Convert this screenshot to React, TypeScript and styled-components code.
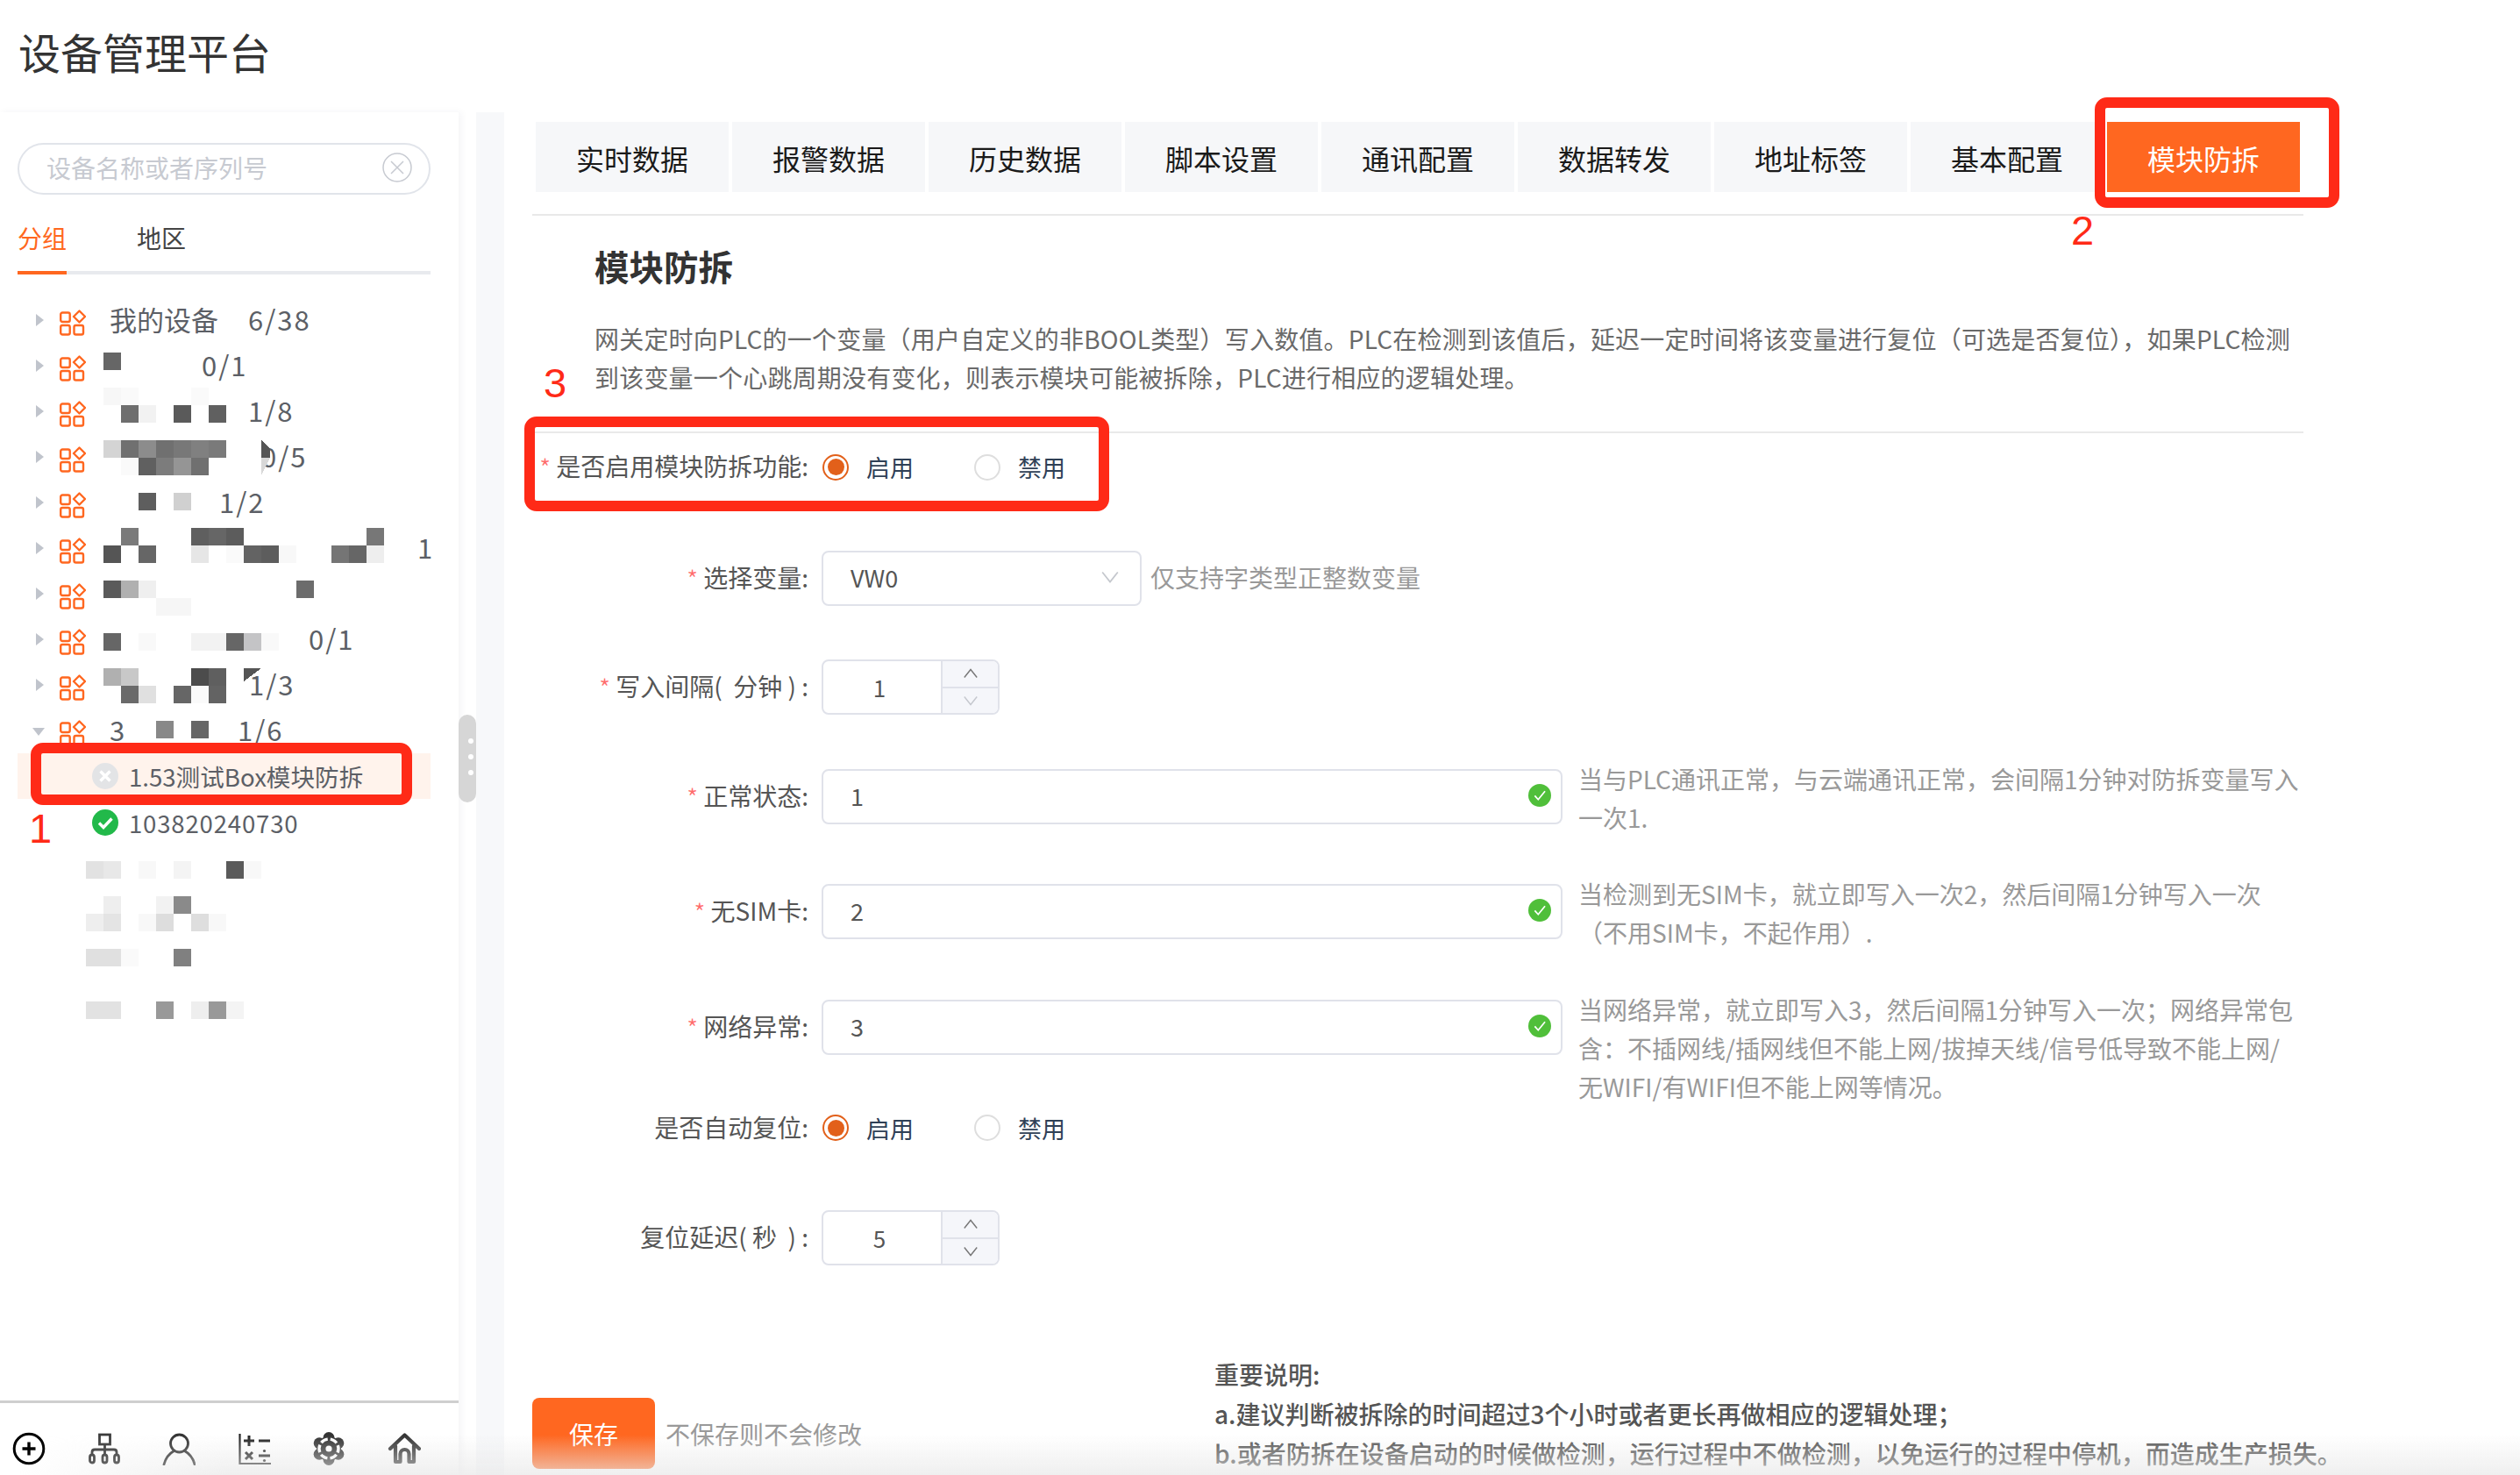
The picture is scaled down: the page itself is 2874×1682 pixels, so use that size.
import React from 'react'
import styled, { createGlobalStyle } from 'styled-components'

const ORANGE = '#ff6720'
const RED = '#ff2a17'
const FONT = '"Noto Sans CJK SC", "Noto Sans", sans-serif'

const GlobalStyle = createGlobalStyle`
  html, body {
    margin: 0;
    padding: 0;
    background: #fff;
  }
  * {
    box-sizing: border-box;
  }
`

const Page = styled.div`
  position: relative;
  width: 2874px;
  height: 1682px;
  overflow: hidden;
  background: #fff;
  font-family: ${FONT};
  color: #555;
`

const Header = styled.header`
  height: 128px;
  display: flex;
  align-items: center;
  padding: 0 0 12px 21px;
  font-size: 48px;
  color: #333;
`

const Body = styled.div`
  display: flex;
  height: 1554px;
`

const Sidebar = styled.aside`
  width: 523px;
  flex: none;
  display: flex;
  flex-direction: column;
  box-shadow: 3px 0 8px rgba(30, 40, 70, 0.05);
`

const Search = styled.div`
  width: 471px;
  height: 59px;
  margin: 35px 0 0 20px;
  padding: 0 19px 3px 31px;
  display: flex;
  align-items: center;
  justify-content: space-between;
  border: 2px solid #e1e4ea;
  border-radius: 30px;
  font-size: 28px;
  color: #c7cad1;
`

const SideTabs = styled.div`
  width: 471px;
  margin: 27px 0 0 20px;
  display: flex;
  gap: 80px;
  border-bottom: 4px solid #e8eaee;
`

const SideTab = styled.div<{ $active?: boolean }>`
  line-height: 44px;
  padding-bottom: 16px;
  margin-bottom: -4px;
  font-size: 28px;
  color: ${({ $active }) => ($active ? ORANGE : '#444')};
  border-bottom: 4px solid ${({ $active }) => ($active ? ORANGE : 'transparent')};
`

const Tree = styled.div`
  position: relative;
  margin-top: 26px;
`

const TreeRow = styled.div`
  height: 52px;
  display: flex;
  align-items: center;
  padding-left: 41px;
  font-size: 31px;
  color: #5c5f66;
  white-space: nowrap;
`

const Arrow = styled.span<{ $open?: boolean }>`
  width: 0;
  height: 0;
  flex: none;
  ${({ $open }) =>
    $open
      ? `
    margin: 2px 17px 0 -4px;
    border-left: 7px solid transparent;
    border-right: 7px solid transparent;
    border-top: 9px solid #c0c4cc;
  `
      : `
    margin-right: 18px;
    border-top: 7px solid transparent;
    border-bottom: 7px solid transparent;
    border-left: 9px solid #c0c4cc;
  `}
`

const GroupIconSvg = styled.svg`
  width: 30px;
  height: 30px;
  flex: none;
  margin-top: 5px;
  fill: none;
  stroke: ${ORANGE};
  stroke-width: 2.4;
`

const Name = styled.span<{ $width: number }>`
  width: ${({ $width }) => $width}px;
  margin: -3px 0 0 27px;
  flex: none;
`

const Count = styled.span`
  margin-top: -3px;
  letter-spacing: 2px;
`

const DeviceRow = styled.div<{ $selected?: boolean }>`
  height: 52px;
  width: 471px;
  margin: ${({ $selected }) => ($selected ? '0' : '1px')} 0 0 20px;
  padding-left: 85px;
  display: flex;
  align-items: center;
  gap: 12px;
  font-size: 27.6px;
  color: #5c5f66;
  background: ${({ $selected }) => ($selected ? '#fff3ec' : 'transparent')};
`

const DeviceSerial = styled.span`
  letter-spacing: 0.8px;
`

const StatusSvg = styled.svg`
  width: 30px;
  height: 30px;
  flex: none;
`

const Mosaic = styled.svg`
  position: absolute;
  left: 98px;
  top: 63px;
  width: 400px;
  height: 800px;
  pointer-events: none;
`

const SideFooter = styled.div`
  margin-top: auto;
  height: 85px;
  border-top: 3px solid #cfcfcf;
  display: flex;
  align-items: center;
  gap: 47.5px;
  padding: 22px 0 0 14px;
`

const FootIcon = styled.svg`
  width: 38px;
  height: 38px;
  flex: none;
`

const Handle = styled.div`
  width: 20px;
  flex: none;
  padding-top: 687px;
`

const HandleGrip = styled.div`
  width: 20px;
  height: 100px;
  border-radius: 10px;
  background: #d6d6d6;
  display: flex;
  flex-direction: column;
  align-items: center;
  gap: 12px;
  padding: 27px 0 0 7px;
`

const GripDot = styled.span`
  width: 6px;
  height: 6px;
  border-radius: 50%;
  background: #fff;
`

const Band = styled.div`
  width: 32px;
  flex: none;
  background: #f7f8fa;
`

const Main = styled.main`
  width: 2020px;
  margin-left: 32px;
  flex: none;
  display: flex;
  flex-direction: column;
`

const TabBar = styled.nav`
  height: 118px;
  padding: 11px 0 0 4px;
  display: flex;
  gap: 4px;
  border-bottom: 2px solid #e9e9e9;
`

const Tab = styled.div<{ $active?: boolean }>`
  width: 220px;
  height: 80px;
  padding-top: 2px;
  display: flex;
  align-items: center;
  justify-content: center;
  font-size: 32px;
  color: ${({ $active }) => ($active ? '#fff' : '#1a1a1a')};
  background: ${({ $active }) => ($active ? ORANGE : '#f6f7f9')};
`

const Intro = styled.section`
  height: 248px;
  padding: 31px 0 0 71px;
  border-bottom: 2px solid #e9e9e9;
`

const Heading = styled.h2`
  margin: 0;
  font-size: 39.5px;
  line-height: 52px;
  font-weight: 700;
  color: #333;
`

const Description = styled.p`
  margin: 35px 0 0;
  font-size: 28px;
  letter-spacing: 0.2px;
  line-height: 44px;
  color: #6a6a6a;
  white-space: nowrap;
`

const Form = styled.div`
  padding-top: 7px;
`

const FormRow = styled.div<{ $height?: number; $gap: number }>`
  height: ${({ $height }) => $height ?? 63}px;
  margin-bottom: ${({ $gap }) => $gap}px;
  display: grid;
  grid-template-columns: 315px 845px 826px;
  grid-template-rows: ${({ $height }) => $height ?? 63}px;
  column-gap: 15px;
  align-items: center;
`

const Label = styled.label`
  display: flex;
  justify-content: flex-end;
  align-items: center;
  gap: 6px;
  padding-bottom: 3px;
  font-size: 28px;
  color: #555;
  white-space: pre;
`

const Star = styled.span`
  font-size: 30px;
  font-weight: 300;
  line-height: 1;
  color: #ff6b6b;
  margin-top: 4px;
`

const Control = styled.div`
  display: flex;
  align-items: center;
  gap: 10px;
`

const RadioGroupWrap = styled(Control)`
  padding-left: 1px;
`

const RadioOption = styled.span<{ $width: number }>`
  width: ${({ $width }) => $width}px;
  display: flex;
  align-items: center;
  gap: 20px;
  font-size: 27px;
  color: #2f4056;
`

const RadioRing = styled.span<{ $checked?: boolean }>`
  width: 30px;
  height: 30px;
  flex: none;
  display: flex;
  align-items: center;
  justify-content: center;
  border-radius: 50%;
  border: 2px solid ${({ $checked }) => ($checked ? '#e2601a' : '#dedede')};
  &::after {
    content: '';
    width: 19px;
    height: 19px;
    border-radius: 50%;
    background: ${({ $checked }) => ($checked ? '#e2601a' : 'transparent')};
  }
`

const Field = styled.div<{ $width: number; $endPad: number }>`
  width: ${({ $width }) => $width}px;
  height: 63px;
  flex: none;
  display: flex;
  align-items: center;
  justify-content: space-between;
  padding: 0 ${({ $endPad }) => $endPad}px 3px 31px;
  border: 2px solid #e0e2ea;
  border-radius: 8px;
  font-size: 27px;
  color: #555;
`

const Chevron = styled.svg<{ $color: string; $size: number }>`
  width: ${({ $size }) => $size}px;
  height: ${({ $size }) => $size}px;
  fill: none;
  stroke: ${({ $color }) => $color};
  stroke-width: 1.6;
`

const CheckSvg = styled.svg`
  width: 26px;
  height: 26px;
  flex: none;
`

const Hint = styled.span`
  padding-bottom: 3px;
  font-size: 28px;
  color: #999;
  white-space: nowrap;
`

const Stepper = styled.div`
  width: 203px;
  height: 63px;
  flex: none;
  display: flex;
  border: 2px solid #e0e2ea;
  border-radius: 8px;
  overflow: hidden;
`

const StepValue = styled.div`
  flex: 1;
  display: flex;
  align-items: center;
  justify-content: center;
  padding-right: 6px;
  font-size: 26px;
  color: #555;
`

const StepButtons = styled.div`
  width: 65px;
  display: flex;
  flex-direction: column;
  border-left: 2px solid #e0e2ea;
  background: #f5f6fa;
`

const StepButton = styled.div`
  flex: 1;
  display: flex;
  align-items: center;
  justify-content: center;
  & + & {
    border-top: 2px solid #e0e2ea;
  }
`

const HelpText = styled.p`
  margin: -11px 0 0 3px;
  align-self: start;
  font-size: 28px;
  line-height: 44px;
  color: #999;
  white-space: nowrap;
`

const Actions = styled.div`
  height: 137px;
  display: flex;
  align-items: flex-end;
`

const SaveButton = styled.button`
  width: 140px;
  height: 81px;
  flex: none;
  margin-bottom: 7px;
  padding: 0;
  border: 0;
  border-radius: 8px;
  background: ${ORANGE};
  color: #fff;
  font-family: ${FONT};
  font-size: 28px;
`

const SaveHint = styled.span`
  flex: none;
  width: 224px;
  margin: 0 0 25px 12px;
  font-size: 28px;
  line-height: 44px;
  color: #999;
  white-space: nowrap;
`

const Notes = styled.div`
  flex: none;
  margin: 0 0 2px 402px;
  font-size: 28px;
  line-height: 45px;
  font-weight: 500;
  color: #555;
  white-space: nowrap;
`

const RedBox = styled.div<{ $x: number; $y: number; $w: number; $h: number }>`
  position: absolute;
  left: ${({ $x }) => $x}px;
  top: ${({ $y }) => $y}px;
  width: ${({ $w }) => $w}px;
  height: ${({ $h }) => $h}px;
  border: 12px solid ${RED};
  border-radius: 14px;
  pointer-events: none;
`

const Mark = styled.span<{ $x: number; $y: number }>`
  position: absolute;
  left: ${({ $x }) => $x}px;
  top: ${({ $y }) => $y}px;
  font-family: "Liberation Sans", sans-serif;
  font-size: 47px;
  line-height: 54px;
  color: ${RED};
`

const BottomFade = styled.div`
  position: absolute;
  left: 0;
  right: 0;
  bottom: 0;
  height: 46px;
  background: linear-gradient(rgba(232, 232, 232, 0), rgba(232, 232, 232, 0.7));
  mask-image: linear-gradient(90deg, transparent 20px, #000 260px);
  pointer-events: none;
`

const tabs = ['实时数据', '报警数据', '历史数据', '脚本设置', '通讯配置', '数据转发', '地址标签', '基本配置', '模块防拆']

const groups = [
  { name: '我的设备', width: 158, count: '6/38' },
  { name: '', width: 105, count: '0/1' },
  { name: '', width: 158, count: '1/8' },
  { name: '', width: 173, count: '0/5' },
  { name: '', width: 125, count: '1/2' },
  { name: '', width: 351, count: '1' },
  { name: '', width: 158, count: '' },
  { name: '', width: 227, count: '0/1' },
  { name: '', width: 159, count: '1/3' },
  { name: '3', width: 146, count: '1/6' },
]

// blurred names in the tree: [column, row, grey]
const cells: [number, number, string][] = [
  [1, 0, '#666'],
  [1, 2, '#f7f7f7'], [2, 2, '#fafafa'], [6, 2, '#fafafa'],
  [2, 3, '#6e6e6e'], [3, 3, '#f2f2f2'], [5, 3, '#5a5a5a'], [7, 3, '#606060'],
  [1, 5, '#d4d4d4'], [2, 5, '#707070'], [3, 5, '#8c8c8c'], [4, 5, '#707070'], [5, 5, '#787878'], [6, 5, '#808080'], [7, 5, '#7a7a7a'],
  [2, 6, '#fafafa'], [3, 6, '#606060'], [4, 6, '#7c7c7c'], [5, 6, '#959595'], [6, 6, '#707070'],
  [3, 8, '#5e5e5e'], [5, 8, '#d0d0d0'],
  [2, 10, '#7a7a7a'], [6, 10, '#5f5f5f'], [7, 10, '#666'], [8, 10, '#5c5c5c'], [16, 10, '#777'],
  [1, 11, '#555'], [3, 11, '#666'], [6, 11, '#e6e6e6'], [8, 11, '#fafafa'], [9, 11, '#636363'], [10, 11, '#5d5d5d'], [11, 11, '#f8f8f8'],
  [14, 11, '#757575'], [15, 11, '#666'], [16, 11, '#eee'],
  [1, 13, '#5a5a5a'], [2, 13, '#b0b0b0'], [3, 13, '#efefef'], [12, 13, '#6c6c6c'],
  [4, 14, '#f6f6f6'], [5, 14, '#f6f6f6'],
  [1, 16, '#666'], [3, 16, '#f9f9f9'], [6, 16, '#f2f2f2'], [7, 16, '#f2f2f2'], [8, 16, '#666'], [9, 16, '#c4c4c6'], [10, 16, '#f9f9f9'],
  [1, 18, '#b0b0b0'], [2, 18, '#c8c8c8'], [6, 18, '#4c4c4c'], [7, 18, '#5f5f5f'],
  [2, 19, '#6a6a6a'], [3, 19, '#e0e0e0'], [5, 19, '#666'], [6, 19, '#fafafa'], [7, 19, '#636363'],
  [4, 21, '#888'], [6, 21, '#666'],
  [0, 29, '#e2e2e2'], [1, 29, '#e8e8e8'], [3, 29, '#f8f8f8'], [5, 29, '#f4f4f4'], [8, 29, '#5a5a5a'], [9, 29, '#f8f8f8'],
  [1, 31, '#eee'], [4, 31, '#f2f2f2'], [5, 31, '#8a8a8a'],
  [0, 32, '#eee'], [1, 32, '#e4e4e4'], [3, 32, '#f8f8f8'], [4, 32, '#ddd'], [6, 32, '#dedede'], [7, 32, '#f8f8f8'],
  [0, 34, '#e0e0e0'], [1, 34, '#e0e0e0'], [2, 34, '#fafafa'], [5, 34, '#808080'],
  [0, 37, '#e2e2e2'], [1, 37, '#e2e2e2'], [4, 37, '#999'], [6, 37, '#eee'], [7, 37, '#999'], [8, 37, '#f4f4f4'],
]

const gearLobes = [-90, -30, 30, 90, 150, 210]

const GroupIcon = () => (
  <GroupIconSvg viewBox="0 0 30 30">
    <rect x="1.2" y="3.5" width="10.5" height="10.5" rx="2" />
    <rect x="1.2" y="18" width="10.5" height="10.5" rx="2" />
    <rect x="16.5" y="18" width="10.5" height="10.5" rx="2" />
    <path d="M22.5 1.5 L29 8 L22.5 14.5 L16 8 Z" strokeLinejoin="round" />
  </GroupIconSvg>
)

const Down = ({ color = '#c5c8ce', size = 22 }: { color?: string; size?: number }) => (
  <Chevron viewBox="0 0 20 20" $color={color} $size={size}>
    <path d="M2 5 L10 15 L18 5" />
  </Chevron>
)

const Up = ({ color = '#777', size = 18 }: { color?: string; size?: number }) => (
  <Chevron viewBox="0 0 20 20" $color={color} $size={size}>
    <path d="M2 15 L10 5 L18 15" />
  </Chevron>
)

const CheckBadge = () => (
  <CheckSvg viewBox="0 0 30 30">
    <circle cx="15" cy="15" r="15" fill="#50bf3a" />
    <path d="M8.5 15.5 L13 20.5 L22 9.5" fill="none" stroke="#fff" strokeWidth="2" />
  </CheckSvg>
)

const NumberField = ({ value, downColor }: { value: string; downColor: string }) => (
  <Stepper>
    <StepValue>{value}</StepValue>
    <StepButtons>
      <StepButton>
        <Up />
      </StepButton>
      <StepButton>
        <Down color={downColor} size={18} />
      </StepButton>
    </StepButtons>
  </Stepper>
)

const RadioGroup = () => (
  <RadioGroupWrap>
    <RadioOption $width={163}>
      <RadioRing $checked />
      启用
    </RadioOption>
    <RadioOption $width={120}>
      <RadioRing />
      禁用
    </RadioOption>
  </RadioGroupWrap>
)

const App: React.FC = () => (
  <>
    <GlobalStyle />
    <Page>
      <Header>设备管理平台</Header>
      <Body>
        <Sidebar>
          <Search>
            设备名称或者序列号
            <svg width="34" height="34" viewBox="0 0 34 34" fill="none" stroke="#c7cad1" strokeWidth="1.5">
              <circle cx="17" cy="17" r="16" />
              <path d="M10 10 L24 24 M24 10 L10 24" />
            </svg>
          </Search>
          <SideTabs>
            <SideTab $active>分组</SideTab>
            <SideTab>地区</SideTab>
          </SideTabs>
          <Tree>
            {groups.map((group, i) => (
              <TreeRow key={i}>
                <Arrow $open={i === groups.length - 1} />
                <GroupIcon />
                <Name $width={group.width}>{group.name}</Name>
                <Count>{group.count}</Count>
              </TreeRow>
            ))}
            <DeviceRow $selected>
              <StatusSvg viewBox="0 0 30 30">
                <circle cx="15" cy="15" r="15" fill="#e3e4e6" />
                <path d="M9.5 9.5 L20.5 20.5 M20.5 9.5 L9.5 20.5" stroke="#fff" strokeWidth="3.4" />
              </StatusSvg>
              1.53测试Box模块防拆
            </DeviceRow>
            <DeviceRow>
              <StatusSvg viewBox="0 0 30 30">
                <circle cx="15" cy="15" r="15" fill="#22b94a" />
                <path d="M8 15.5 L13 20.5 L22.5 10.5" fill="none" stroke="#fff" strokeWidth="3.4" />
              </StatusSvg>
              <DeviceSerial>103820240730</DeviceSerial>
            </DeviceRow>
            <Mosaic viewBox="0 0 400 800" shapeRendering="crispEdges">
              {cells.map(([c, r, grey], i) => (
                <rect key={i} x={c * 20} y={r * 20} width="20" height="20" fill={grey} />
              ))}
              <polygon points="200,100 210,110 210,120 200,120" fill="#555" />
              <polygon points="200,120 210,120 200,140" fill="#d8d8d8" />
              <polygon points="180,360 200,360 180,375" fill="#555" />
            </Mosaic>
          </Tree>
          <SideFooter>
            <FootIcon viewBox="0 0 38 38" fill="none" stroke="#000" strokeWidth="3">
              <circle cx="19" cy="19" r="16.8" />
              <path d="M19 11.5 V26.5 M11.5 19 H26.5" strokeWidth="3.4" />
            </FootIcon>
            <FootIcon viewBox="0 0 38 38" fill="none" stroke="#3c3c3c" strokeWidth="2.8">
              <rect x="13.5" y="3" width="12" height="11" />
              <path d="M19.5 14 V26 M5 26 V23 Q5 20 8 20 H30 Q33 20 33 23 V26" />
              <rect x="2.5" y="26" width="5" height="9" rx="2.5" />
              <rect x="17" y="26" width="5" height="9" rx="2.5" />
              <rect x="30.5" y="26" width="5" height="9" rx="2.5" />
            </FootIcon>
            <FootIcon viewBox="0 0 38 38" fill="none" stroke="#333" strokeWidth="2.8" strokeLinecap="round">
              <circle cx="19.5" cy="13" r="10" />
              <path d="M2 37 C4 29 9 24 13.5 21.5 M37 37 C35 29 30 24 25.5 21.5" />
            </FootIcon>
            <FootIcon viewBox="0 0 38 38" fill="none" stroke="#222">
              <path d="M2.5 2 V36 H38" strokeWidth="2.2" />
              <path d="M7 10 H19 M13 4 V16 M24 10 H37 M9 23 L17 31 M17 23 L9 31 M24 27 H37" strokeWidth="3" />
              <circle cx="30.5" cy="21.5" r="1.6" fill="#222" stroke="none" />
              <circle cx="30.5" cy="32.5" r="1.6" fill="#222" stroke="none" />
            </FootIcon>
            <FootIcon viewBox="0 0 38 38">
              <circle cx="19" cy="19" r="14" fill="#333" />
              {gearLobes.map(angle => (
                <circle
                  key={angle}
                  cx={19 + 12.5 * Math.cos((angle * Math.PI) / 180)}
                  cy={19 + 12.5 * Math.sin((angle * Math.PI) / 180)}
                  r="6.5"
                  fill="#333"
                />
              ))}
              <circle
                cx="19"
                cy="19"
                r="11"
                fill="none"
                stroke="#fff"
                strokeWidth="3.4"
                strokeDasharray="8.5 3"
                transform="rotate(38 19 19)"
              />
              <circle cx="19" cy="19" r="3.6" fill="#fff" />
            </FootIcon>
            <FootIcon viewBox="0 0 38 38" fill="none" stroke="#333" strokeWidth="4.2" strokeLinecap="round" strokeLinejoin="round">
              <path d="M3 19 L19.5 3.5 L36 19 M9 16 V34 H14.5 V25 A5 5 0 0 1 24.5 25 V34 H30 V16" />
            </FootIcon>
          </SideFooter>
        </Sidebar>
        <Handle>
          <HandleGrip>
            <GripDot />
            <GripDot />
            <GripDot />
          </HandleGrip>
        </Handle>
        <Band />
        <Main>
          <TabBar>
            {tabs.map((tab, i) => (
              <Tab key={tab} $active={i === tabs.length - 1}>
                {tab}
              </Tab>
            ))}
          </TabBar>
          <Intro>
            <Heading>模块防拆</Heading>
            <Description>
              网关定时向PLC的一个变量（用户自定义的非BOOL类型）写入数值。PLC在检测到该值后，延迟一定时间将该变量进行复位（可选是否复位），如果PLC检测
              <br />
              到该变量一个心跳周期没有变化，则表示模块可能被拆除，PLC进行相应的逻辑处理。
            </Description>
          </Intro>
          <Form>
            <FormRow $gap={64}>
              <Label>
                <Star>*</Star>是否启用模块防拆功能:
              </Label>
              <RadioGroup />
            </FormRow>
            <FormRow $gap={61}>
              <Label>
                <Star>*</Star>选择变量:
              </Label>
              <Control>
                <Field $width={365} $endPad={23}>
                  VW0
                  <Down />
                </Field>
                <Hint>仅支持字类型正整数变量</Hint>
              </Control>
            </FormRow>
            <FormRow $gap={62}>
              <Label>
                <Star>*</Star>写入间隔(  分钟 ) :
              </Label>
              <Control>
                <NumberField value="1" downColor="#c5c8ce" />
              </Control>
            </FormRow>
            <FormRow $gap={68}>
              <Label>
                <Star>*</Star>正常状态:
              </Label>
              <Control>
                <Field $width={845} $endPad={11}>
                  1
                  <CheckBadge />
                </Field>
              </Control>
              <HelpText>
                当与PLC通讯正常，与云端通讯正常，会间隔1分钟对防拆变量写入
                <br />
                一次1.
              </HelpText>
            </FormRow>
            <FormRow $gap={69}>
              <Label>
                <Star>*</Star>无SIM卡:
              </Label>
              <Control>
                <Field $width={845} $endPad={11}>
                  2
                  <CheckBadge />
                </Field>
              </Control>
              <HelpText>
                当检测到无SIM卡，就立即写入一次2，然后间隔1分钟写入一次
                <br />
                （不用SIM卡，不起作用）.
              </HelpText>
            </FormRow>
            <FormRow $gap={52}>
              <Label>
                <Star>*</Star>网络异常:
              </Label>
              <Control>
                <Field $width={845} $endPad={11}>
                  3
                  <CheckBadge />
                </Field>
              </Control>
              <HelpText>
                当网络异常，就立即写入3，然后间隔1分钟写入一次；网络异常包
                <br />
                含：不插网线/插网线但不能上网/拔掉天线/信号低导致不能上网/
                <br />
                无WIFI/有WIFI但不能上网等情况。
              </HelpText>
            </FormRow>
            <FormRow $height={62} $gap={63}>
              <Label>是否自动复位:</Label>
              <RadioGroup />
            </FormRow>
            <FormRow $gap={102}>
              <Label>复位延迟( 秒  ) :</Label>
              <Control>
                <NumberField value="5" downColor="#777" />
              </Control>
            </FormRow>
            <Actions>
              <SaveButton>保存</SaveButton>
              <SaveHint>不保存则不会修改</SaveHint>
              <Notes>
                重要说明:
                <br />
                a.建议判断被拆除的时间超过3个小时或者更长再做相应的逻辑处理；
                <br />
                b.或者防拆在设备启动的时候做检测，运行过程中不做检测，以免运行的过程中停机，而造成生产损失。
              </Notes>
            </Actions>
          </Form>
        </Main>
      </Body>
      <RedBox $x={35} $y={847} $w={435} $h={71} />
      <RedBox $x={2389} $y={111} $w={279} $h={126} />
      <RedBox $x={598} $y={475} $w={667} $h={108} />
      <Mark $x={33} $y={918}>1</Mark>
      <Mark $x={2362} $y={236}>2</Mark>
      <Mark $x={620} $y={410}>3</Mark>
      <BottomFade />
    </Page>
  </>
)

export default App
